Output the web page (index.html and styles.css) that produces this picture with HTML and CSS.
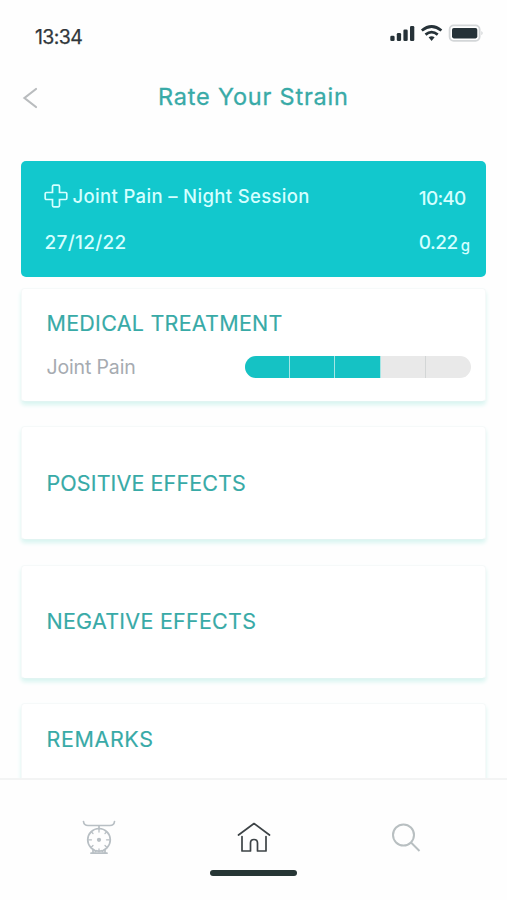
FILE: index.html
```
<!DOCTYPE html>
<html lang="en">
<head>
<meta charset="utf-8">
<title>Rate Your Strain</title>
<link rel="stylesheet" href="styles.css">
</head>
<body>
<div class="app">
  <div class="status">
    <span class="clock">13:34</span>
    <svg class="indicators" width="96" height="20" viewBox="0 0 96 20">
      <g fill="#263238">
        <rect x="2.3" y="11.7" width="4.3" height="5.3" rx="1.3"/>
        <rect x="8.8" y="8.9" width="4.3" height="8.1" rx="1.3"/>
        <rect x="15.4" y="5.4" width="4.3" height="11.6" rx="1.3"/>
        <rect x="22" y="2" width="4.3" height="15" rx="1.3"/>
        <path d="M40.600 13.200q3-2 6 0L43.600 17Z"/>
      </g>
      <g fill="none" stroke="#263238" stroke-width="2.700">
        <path d="M33.800 6.500q9.800-8 19.600 0M37.500 10.600q6.100-5 12.200 0"/>
      </g>
      <rect x="61.6" y="1.4" width="30" height="15.4" rx="4" fill="#fff" stroke="#d3d6d8" stroke-width="1.8"/>
      <rect x="64" y="4" width="25.3" height="10.4" rx="1.8" fill="#263238"/>
      <path d="M93.500 7q2 2.100 0 4.200Z" fill="#c3c7c9"/>
    </svg>
  </div>
  <header class="header">
    <svg class="back" width="16" height="22" viewBox="0 0 16 22"><path d="M14 2 2.500 11 14 20" fill="none" stroke="#b9bcbe" stroke-width="2.200" stroke-linecap="round"/></svg>
    <h1 class="title">Rate Your Strain</h1>
  </header>
  <main class="content">
    <section class="session">
      <div class="row">
        <svg class="plus" width="24" height="24" viewBox="0 0 24 24"><path d="M9.700 1.200h4.600q1.200 0 1.200 1.200v6.100h6.100q1.200 0 1.200 1.200v4.600q0 1.200-1.200 1.200h-6.100v6.100q0 1.200-1.200 1.200H9.700q-1.200 0-1.200-1.200v-6.100H2.400q-1.200 0-1.200-1.200V9.700q0-1.200 1.200-1.200h6.100V2.400q0-1.200 1.200-1.200Z" fill="none" stroke="#d4ffff" stroke-width="1.700"/></svg>
        <span class="name">Joint Pain – Night Session</span>
        <span class="hour">10:40</span>
      </div>
      <div class="row">
        <span class="date">27/12/22</span>
        <span class="dose">0.22<span class="unit">g</span></span>
      </div>
    </section>
    <section class="card treatment">
      <h2 class="heading medical">MEDICAL TREATMENT</h2>
      <div class="rating">
        <span class="label">Joint Pain</span>
        <div class="meter"><i class="on"></i><i class="on"></i><i class="on"></i><i></i><i></i></div>
      </div>
    </section>
    <section class="card"><h2 class="heading positive">POSITIVE EFFECTS</h2></section>
    <section class="card"><h2 class="heading negative">NEGATIVE EFFECTS</h2></section>
    <section class="card last"><h2 class="heading remarks">REMARKS</h2></section>
  </main>
  <footer class="footer">
    <nav class="nav">
      <svg width="34" height="36" viewBox="0 0 34 36" fill="none" stroke="#b8bfc4" stroke-width="1.700" stroke-linecap="round">
        <path d="M1.500 1.500q.5 4 4.500 4h22q4 0 4.500-4M17 6v3M9 33.200h16M11 30v3M23 30v3"/>
        <circle cx="17" cy="19.800" r="11.300"/>
        <path d="M17 9v3M17 29v3M6.500 19.800h3M24.500 19.800h3M9.500 12l1.500 1.500M24.500 12 23 13.500M9.500 27l1.500-1.500M24.500 27 23 25.500M13 32l1.500-1.500M21 32l-1.500-1.500" stroke-width="1.300"/>
        <circle cx="17" cy="19.800" r="1.300" fill="#b8bfc4"/>
      </svg>
      <svg width="34" height="32" viewBox="0 0 34 32" fill="none" stroke="#3d4346" stroke-width="1.700" stroke-linecap="round" stroke-linejoin="round">
        <path d="M1.500 13 17 1.500 32.500 13M5 14.500V29h8.500V21q0-3.500 3.500-3.500t3.500 3.500v8H29V14.500"/>
      </svg>
      <svg width="30" height="30" viewBox="0 0 30 30" fill="none" stroke="#b8bfc1" stroke-width="2">
        <circle cx="12.500" cy="12" r="10.500"/><path d="m20 19.500 8.500 8.500"/>
      </svg>
    </nav>
    <div class="home-bar"></div>
  </footer>
</div>
</body>
</html>
```
FILE: styles.css
```
* { box-sizing: border-box; }
body { margin: 0; background: #fefefe; font-family: Inter, "Liberation Sans", sans-serif; }
svg { display: block; flex: none; }
h1, h2 { margin: 0; font-weight: 400; white-space: nowrap; }
.app { width: 507px; height: 900px; display: flex; flex-direction: column; overflow: hidden; }
.status { height: 68px; padding: 24px 20px 0 35px; display: flex; justify-content: space-between; align-items: flex-start; color: #30363a; }
.clock { font-size: 19.5px; line-height: 26px; letter-spacing: -0.6px; -webkit-text-stroke: 0.25px #30363a; }
.indicators { margin-right: 3px; }
.header { height: 93px; padding: 14px 0 0 22px; display: flex; align-items: flex-start; color: #38aaa7; }
.back { margin-top: 5px; }
.title { margin-left: 120px; font-size: 23.5px; line-height: 30px; letter-spacing: 0.8px; -webkit-text-stroke: 0.3px #38aaa7; }
.content { flex: 1; min-height: 0; overflow: hidden; padding: 0 21.5px 0 20.5px; display: flex; flex-direction: column; }
.session { flex: none; height: 115.5px; border-radius: 5px; background: #12c8cd; color: #d4ffff; padding: 23px 16px 0 23px; font-size: 19px; line-height: 24px; font-weight: 500; margin-bottom: 11.5px; }
.row { height: 46.5px; display: flex; align-items: flex-start; }
.name { margin-left: 5px; font-size: 18.5px; letter-spacing: 0.35px; }
.hour { margin: 3px 4px 0 auto; letter-spacing: -0.8px; }
.date { margin-left: 1px; letter-spacing: 0.3px; }
.dose { margin-left: auto; letter-spacing: -0.5px; }
.unit { display: inline-block; font-size: 15px; margin-left: 3px; line-height: 1; position: relative; top: 2px; }
.card { flex: none; height: 114px; margin-bottom: 24.3px; border-radius: 4px; background: #fff; border: 1px solid #f6f9f9; border-bottom-color: #e1f4f2; box-shadow: 0 3px 4px #d9f5f1; padding: 0 14px 1px 25px; display: flex; flex-direction: column; justify-content: center; }
.treatment { justify-content: flex-start; padding-top: 21px; }
.last { height: 120px; justify-content: flex-start; padding-top: 22px; }
.heading { font-size: 21.5px; line-height: 26px; color: #38aaa7; -webkit-text-stroke: 0.15px #38aaa7; }
.medical { letter-spacing: 0.25px; }
.positive { letter-spacing: 0.1px; }
.negative { letter-spacing: 0.25px; }
.remarks { letter-spacing: 0.6px; }
.rating { margin-top: 19px; display: flex; align-items: center; justify-content: space-between; height: 24px; }
.label { font-size: 19.5px; letter-spacing: -0.15px; color: #a6abb1; }
.meter { width: 226px; height: 21.5px; display: flex; border-radius: 11px; overflow: hidden; background: #e9e9e9; }
.meter i { flex: 1; border-right: 1px solid #d3d6d6; }
.meter i:last-child { border: 0; }
.meter .on { background: #15c2c4; border-right-color: #a5e6e5; }
.footer { height: 122px; border-top: 2px solid #f3f4f4; background: #fefefe; display: flex; flex-direction: column; align-items: center; }
.nav { width: 339px; height: 90px; padding-top: 26px; margin-right: 4px; display: flex; justify-content: space-between; align-items: center; }
.home-bar { width: 87px; height: 5.5px; border-radius: 3px; background: #263635; }
```
